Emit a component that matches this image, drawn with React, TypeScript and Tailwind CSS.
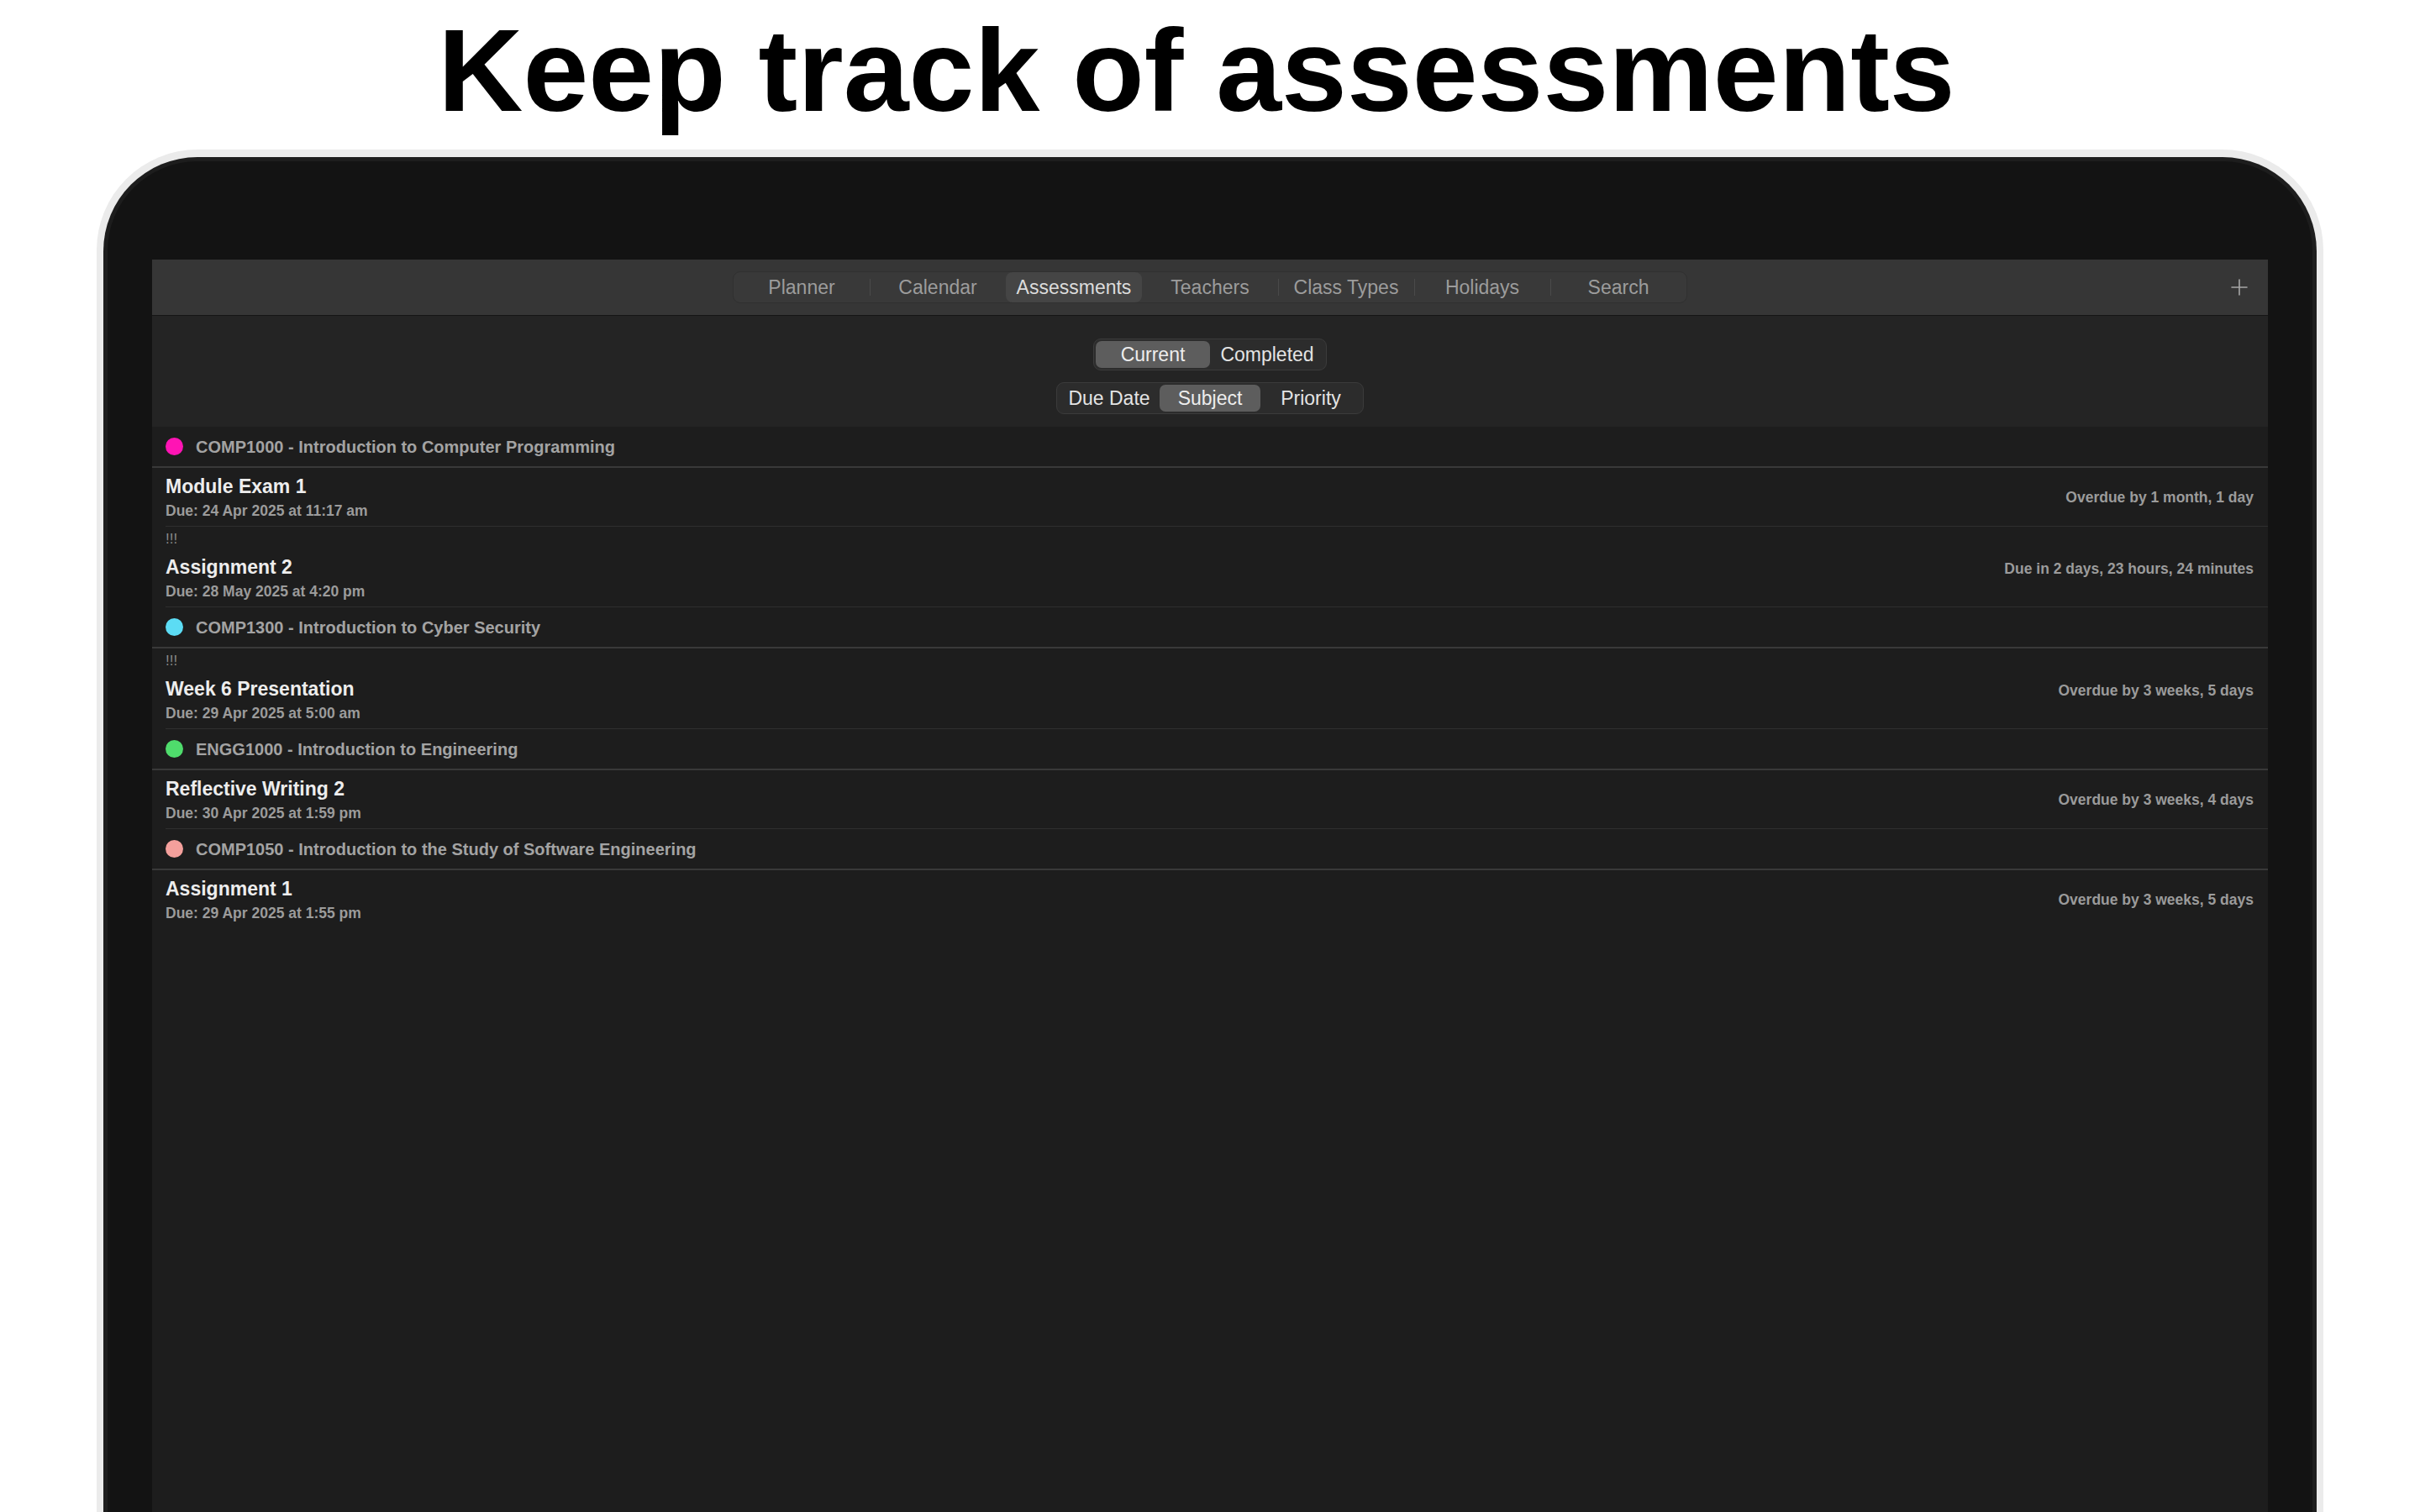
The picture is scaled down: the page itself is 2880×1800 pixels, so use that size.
import React from 'react';

type Item = {
  title: string;
  due: string;
  status: string;
  priority?: boolean;
};

type Subject = {
  name: string;
  dot: string;
  items: Item[];
};

const tabs = ['Planner', 'Calendar', 'Assessments', 'Teachers', 'Class Types', 'Holidays', 'Search'];

const subjects: Subject[] = [
  {
    name: 'COMP1000 - Introduction to Computer Programming',
    dot: 'bg-[#ff14b4]',
    items: [
      { title: 'Module Exam 1', due: 'Due: 24 Apr 2025 at 11:17 am', status: 'Overdue by 1 month, 1 day' },
      { title: 'Assignment 2', due: 'Due: 28 May 2025 at 4:20 pm', status: 'Due in 2 days, 23 hours, 24 minutes', priority: true },
    ],
  },
  {
    name: 'COMP1300 - Introduction to Cyber Security',
    dot: 'bg-[#5cdcf4]',
    items: [
      { title: 'Week 6 Presentation', due: 'Due: 29 Apr 2025 at 5:00 am', status: 'Overdue by 3 weeks, 5 days', priority: true },
    ],
  },
  {
    name: 'ENGG1000 - Introduction to Engineering',
    dot: 'bg-[#4fdc6c]',
    items: [
      { title: 'Reflective Writing 2', due: 'Due: 30 Apr 2025 at 1:59 pm', status: 'Overdue by 3 weeks, 4 days' },
    ],
  },
  {
    name: 'COMP1050 - Introduction to the Study of Software Engineering',
    dot: 'bg-[#f4a09c]',
    items: [
      { title: 'Assignment 1', due: 'Due: 29 Apr 2025 at 1:55 pm', status: 'Overdue by 3 weeks, 5 days' },
    ],
  },
];

function Segmented({ options, active, width }: { options: string[]; active: string; width: string }) {
  return (
    <div className="flex h-[38px] rounded-[9px] border border-[#3b3b3b] bg-[#2c2c2c] p-[2px]">
      {options.map((o) => (
        <div
          key={o}
          className={`${width} flex items-center justify-center rounded-[7px] text-[23px] text-[#e4e4e4] ${
            o === active ? 'bg-[#5d5d5d] text-[#ededed]' : ''
          }`}
        >
          {o}
        </div>
      ))}
    </div>
  );
}

export default function App() {
  return (
    <div className="w-[2880px] h-[1800px] bg-white overflow-hidden flex flex-col items-center font-['Liberation_Sans',Arial,sans-serif]">
      <h1 className="pt-[14px] pr-[32px] text-[140px] leading-none font-bold text-black">Keep track of assessments</h1>

      {/* laptop frame */}
      <div className="mt-[24px] w-[2650px] flex-1 bg-[#ebebeb] rounded-t-[120px] pt-[9px] px-[8px]">
        <div className="h-full bg-[#131313] border-[5px] border-b-0 border-[#1d1d1d] rounded-t-[112px] pt-[117px] px-[53px]">
          <div className="h-full bg-[#1d1d1d] flex flex-col">
            {/* toolbar */}
            <div className="h-[67px] shrink-0 bg-[#363636] border-b border-[#151515] grid grid-cols-[1fr_auto_1fr] items-center">
              <div />
              <div className="flex h-[38px] rounded-[9px] border border-[#303030] bg-[#393939]">
                {tabs.map((t, i) => {
                  const active = t === 'Assessments';
                  const prevActive = tabs[i - 1] === 'Assessments';
                  return (
                    <div key={t} className="relative w-[162px] flex items-center justify-center">
                      {i > 0 && !active && !prevActive && (
                        <div className="absolute left-0 top-[8px] bottom-[8px] w-px bg-[#4a4a4a]" />
                      )}
                      <div
                        className={`h-full w-full flex items-center justify-center rounded-[8px] text-[23px] ${
                          active ? 'bg-[#454545] text-[#dcdcdc]' : 'text-[#9c9c9c]'
                        }`}
                      >
                        {t}
                      </div>
                    </div>
                  );
                })}
              </div>
              <div className="justify-self-end pr-[24px]">
                <svg width="20" height="20" viewBox="0 0 20 20" fill="none" stroke="#a8a8a8" strokeWidth="1.6" strokeLinecap="round">
                  <path d="M10 1v18M1 10h18" />
                </svg>
              </div>
            </div>

            {/* filter header */}
            <div className="h-[132px] shrink-0 bg-[#242424] flex flex-col items-center pt-[27px] gap-[14px]">
              <Segmented options={['Current', 'Completed']} active="Current" width="w-[136px]" />
              <Segmented options={['Due Date', 'Subject', 'Priority']} active="Subject" width="w-[120px]" />
            </div>

            {/* list */}
            <div className="flex-1 bg-[#1d1d1d]">
              {subjects.map((s, si) => (
                <div key={s.name}>
                  <div className="h-[49px] border-b-2 border-[#393939] flex items-center pl-[16px] gap-[15px]">
                    <div className={`w-[21px] h-[21px] rounded-full ${s.dot}`} />
                    <span className="text-[20px] font-bold text-[#a3a3a3]">{s.name}</span>
                  </div>
                  {s.items.map((it, ii) => {
                    const last = si === subjects.length - 1 && ii === s.items.length - 1;
                    return (
                      <div
                        key={it.title}
                        className={`ml-[16px] pr-[17px] flex items-center justify-between ${
                          last ? '' : 'border-b border-[#2f2f2f]'
                        } ${it.priority ? 'pt-[3px] pb-[7px]' : 'pt-[9px] pb-[7px]'}`}
                      >
                        <div className="flex flex-col">
                          {it.priority && <span className="text-[17px] leading-[24px] text-[#8a8a8a] mb-[8px]">!!!</span>}
                          <span className="text-[23px] leading-[26px] font-bold text-[#ededed]">{it.title}</span>
                          <span className="mt-[5px] text-[17.5px] leading-[22px] font-bold text-[#9b9b9b]">{it.due}</span>
                        </div>
                        <span className={`text-[17.5px] font-bold text-[#9b9b9b] ${it.priority ? 'mt-[10px]' : ''}`}>
                          {it.status}
                        </span>
                      </div>
                    );
                  })}
                </div>
              ))}
            </div>
          </div>
        </div>
      </div>
    </div>
  );
}
